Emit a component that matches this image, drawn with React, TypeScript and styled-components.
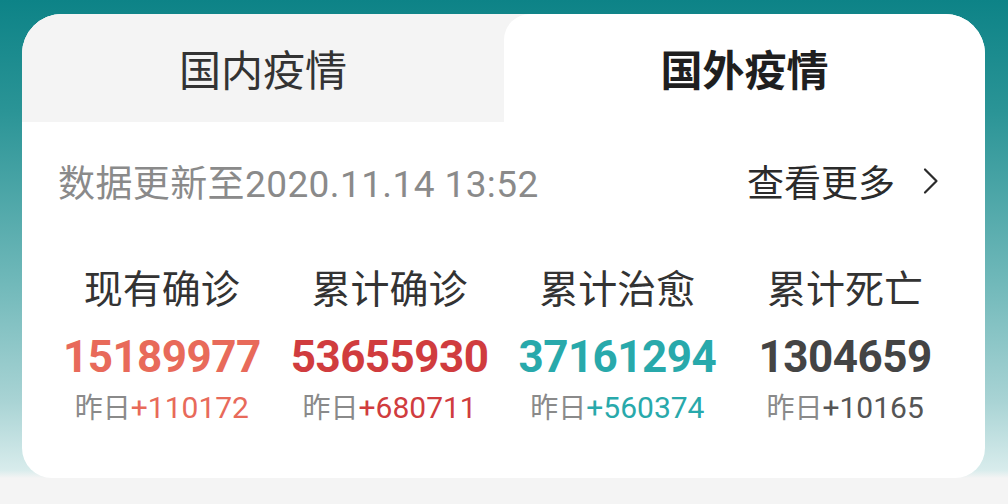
import { createGlobalStyle, styled } from "styled-components"

const GlobalStyle = createGlobalStyle`
  html, body {
    margin: 0;
    padding: 0;
  }
  body {
    font-family: Roboto, "Noto Sans CJK SC", sans-serif;
    background: #f4f4f4;
  }
`

const Page = styled.div`
  width: 1008px;
  height: 504px;
  overflow: hidden;
  box-sizing: border-box;
  padding: 14px 23px 0 22px;
  background: linear-gradient(
    180deg,
    #0d8387 0px,
    #2a9496 110px,
    #6fb8b9 280px,
    #a8d3d4 400px,
    #d8ecec 470px,
    #f4f4f4 478px,
    #f4f4f4 100%
  );
`

const Card = styled.div`
  background: #fff;
  border-radius: 40px 40px 30px 30px;
  overflow: hidden;
  height: 464px;
  display: flex;
  flex-direction: column;
`

const Tabs = styled.div`
  display: grid;
  grid-template-columns: 482px 1fr;
  height: 108px;
  background: #f4f4f4;
`

const Tab = styled.div<{ $active?: boolean }>`
  display: flex;
  align-items: center;
  justify-content: center;
  padding-bottom: 2px;
  font-size: 42px;
  font-weight: ${(p) => (p.$active ? 700 : 400)};
  color: ${(p) => (p.$active ? "#1f1f1f" : "#333")};
  background: ${(p) => (p.$active ? "#fff" : "#f4f4f4")};
  border-top-left-radius: ${(p) => (p.$active ? "26px" : "0")};
`

const UpdateRow = styled.div`
  display: flex;
  align-items: center;
  justify-content: space-between;
  height: 50px;
  margin-top: 34px;
  padding: 0 44px 0 36px;
`

const UpdateText = styled.span`
  font-size: 37px;
  color: #8a8a8a;
  letter-spacing: 0.4px;
`

const MoreLink = styled.a`
  display: flex;
  align-items: center;
  gap: 26px;
  font-size: 37px;
  color: #2b2b2b;
  text-decoration: none;
`

const Stats = styled.div`
  display: grid;
  grid-template-columns: repeat(4, 1fr);
  padding: 0 26px;
  margin-top: 59px;
`

const Stat = styled.div`
  display: flex;
  flex-direction: column;
  align-items: center;
`

const Label = styled.div`
  font-size: 39px;
  line-height: 50px;
  color: #333;
`

const Value = styled.div<{ $color: string }>`
  margin-top: 17px;
  font-size: 44px;
  line-height: 50px;
  font-weight: 700;
  color: ${(p) => p.$color};
  letter-spacing: -0.5px;
`

const Delta = styled.div`
  margin-top: 8px;
  font-size: 28px;
  line-height: 36px;
  color: #8a8a8a;
`

const DeltaNum = styled.span<{ $color: string }>`
  font-size: 30px;
  color: ${(p) => p.$color};
`

const stats = [
  { label: "现有确诊", value: "15189977", delta: "+110172", color: "#e86a5a" },
  { label: "累计确诊", value: "53655930", delta: "+680711", color: "#d03c3e" },
  { label: "累计治愈", value: "37161294", delta: "+560374", color: "#28a9ab" },
  { label: "累计死亡", value: "1304659", delta: "+10165", color: "#444" },
]

export default function App() {
  return (
    <>
      <GlobalStyle />
      <Page>
        <Card>
          <Tabs>
            <Tab>国内疫情</Tab>
            <Tab $active>国外疫情</Tab>
          </Tabs>
          <UpdateRow>
            <UpdateText>数据更新至2020.11.14 13:52</UpdateText>
            <MoreLink href="#">
              查看更多
              <svg width="20" height="28" viewBox="0 0 20 28" fill="none">
                <path d="M4 2.5 L15.5 14 L4 25.5" stroke="#2b2b2b" strokeWidth="2.2" strokeLinecap="round" strokeLinejoin="round" />
              </svg>
            </MoreLink>
          </UpdateRow>
          <Stats>
            {stats.map((s) => (
              <Stat key={s.label}>
                <Label>{s.label}</Label>
                <Value $color={s.color}>{s.value}</Value>
                <Delta>
                  昨日<DeltaNum $color={s.color === "#444" ? "#555" : s.color}>{s.delta}</DeltaNum>
                </Delta>
              </Stat>
            ))}
          </Stats>
        </Card>
      </Page>
    </>
  )
}
